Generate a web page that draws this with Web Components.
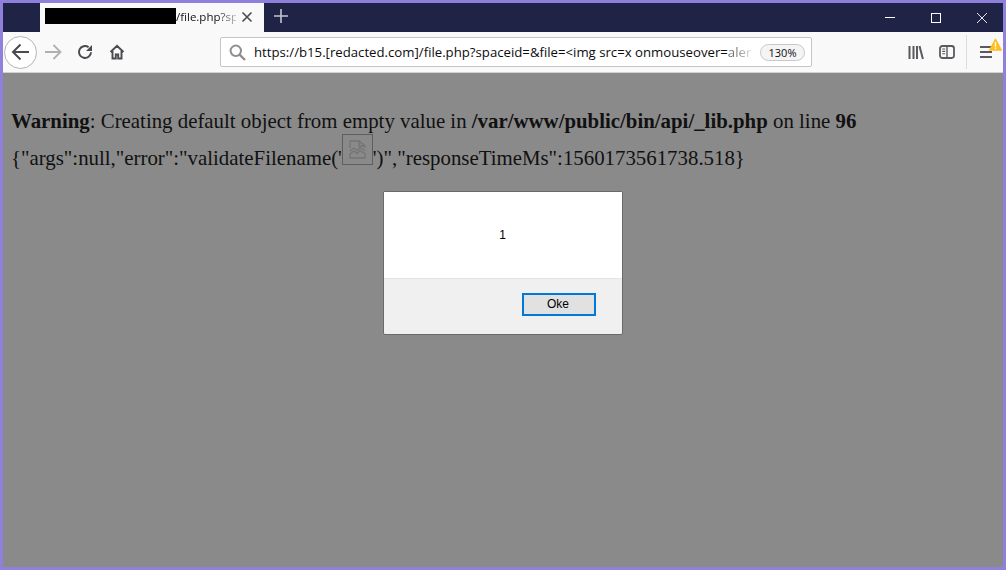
<!DOCTYPE html>
<html>
<head>
<meta charset="utf-8">
<title>file.php</title>
<style>
  html, body { margin: 0; height: 100%; }
  body { background: #8f80dc; overflow: hidden; }
</style>
</head>
<body>
<browser-window>
  <browser-tabbar slot="tabs"></browser-tabbar>
  <browser-navbar slot="nav"></browser-navbar>
  <php-page>
    <p class="line"><b>Warning</b>: Creating default object from empty value in <b>/var/www/public/bin/api/_lib.php</b> on line <b>96</b></p>
  </php-page>
  <alert-dialog slot="dialog" message="1" button="Oke"></alert-dialog>
</browser-window>

<script>
class BrowserWindow extends HTMLElement {
  constructor() {
    super();
    this.attachShadow({ mode: 'open' });
    this.shadowRoot.innerHTML = `
      <style>
        :host {
          display: flex;
          flex-direction: column;
          box-sizing: border-box;
          width: 1006px;
          height: 570px;
          border: 3px solid #8f80dc;
          position: relative;
          background: #8a8a8a;
        }
        .content { flex: 1; position: relative; }
      </style>
      <slot name="tabs"></slot>
      <slot name="nav"></slot>
      <div class="content">
        <slot></slot>
        <slot name="dialog"></slot>
      </div>
    `;
  }
}

class BrowserTabbar extends HTMLElement {
  constructor() {
    super();
    this.attachShadow({ mode: 'open' });
    this.shadowRoot.innerHTML = `
      <style>
        :host {
          display: flex;
          height: 29px;
          background: #1f2345;
          flex: none;
        }
        .spacer { width: 37px; flex: none; }
        .tab {
          width: 224px;
          height: 29px;
          flex: none;
          background: #f9f9fa;
          display: flex;
          align-items: flex-start;
          box-sizing: border-box;
          padding: 5px 0 0 5px;
          font: 11.5px "Open Sans", "Noto Sans", sans-serif;
          color: #111;
        }
        .black { width: 131px; height: 16px; background: #000; flex: none; }
        .title {
          width: 60px;
          white-space: nowrap;
          line-height: 17px;
          flex: none;
          -webkit-mask-image: linear-gradient(to right, #000 68%, rgba(0,0,0,.25) 100%);
          mask-image: linear-gradient(to right, #000 68%, rgba(0,0,0,.25) 100%);
        }
        .close { margin: 3px 0 0 5px; flex: none; display: block; }
        .plus { margin: 6px 0 0 10px; flex: none; display: block; }
        .controls { margin-left: auto; display: flex; }
        .ctl { width: 46px; height: 29px; display: flex; align-items: center; justify-content: center; }
        .ctl.last { width: 44px; justify-content: flex-start; padding-left: 18px; box-sizing: border-box; }
      </style>
      <div class="spacer"></div>
      <div class="tab">
        <div class="black"></div>
        <div class="title">/file.php?sp</div>
        <svg class="close" width="12" height="12" viewBox="0 0 12 12"><path d="M1.5 1.5l9 9M10.5 1.5l-9 9" stroke="#4a4a4f" stroke-width="1.6" fill="none"/></svg>
      </div>
      <svg class="plus" width="14" height="14" viewBox="0 0 14 14"><path d="M7 0v14M0 7h14" stroke="#c4c5d0" stroke-width="1.6" fill="none"/></svg>
      <div class="controls">
        <div class="ctl"><svg width="10" height="10" viewBox="0 0 10 10"><path d="M0 4.5h10" stroke="#fff" fill="none"/></svg></div>
        <div class="ctl"><svg width="10" height="10" viewBox="0 0 10 10"><rect x=".5" y=".5" width="9" height="9" stroke="#fff" fill="none"/></svg></div>
        <div class="ctl last"><svg width="10" height="10" viewBox="0 0 10 10"><path d="M0 0l10 10M10 0L0 10" stroke="#fff" stroke-width=".9" fill="none"/></svg></div>
      </div>
    `;
  }
}

class BrowserNavbar extends HTMLElement {
  constructor() {
    super();
    this.attachShadow({ mode: 'open' });
    this.shadowRoot.innerHTML = `
      <style>
        :host {
          display: flex;
          align-items: center;
          flex: none;
          height: 41px;
          box-sizing: border-box;
          background: #f9f9fa;
          border-bottom: 1px solid #d2d2d4;
          position: relative;
        }
        svg { display: block; flex: none; }
        .back {
          width: 33px; height: 33px; box-sizing: border-box; flex: none;
          border: 1px solid #b4b4b6; border-radius: 50%; background: #fff;
          display: flex; align-items: center; justify-content: center;
          margin-left: 1px;
        }
        .urlbar {
          box-sizing: border-box;
          width: 592px;
          height: 30px;
          background: #fff;
          border: 1px solid #c5c5c7;
          border-radius: 2px;
          display: flex;
          align-items: center;
          flex: none;
          font: 13.2px "Open Sans", "Noto Sans", sans-serif;
          color: #0c0c0d;
        }
        .url {
          margin-left: 8px;
          width: 498px;
          white-space: nowrap;
          flex: none;
        }
        .url span {
          color: #737373;
          -webkit-mask-image: linear-gradient(to right, #000 30%, rgba(0,0,0,.2) 100%);
          mask-image: linear-gradient(to right, #000 30%, rgba(0,0,0,.2) 100%);
        }
        .zoom {
          margin-left: 8px;
          box-sizing: border-box;
          width: 45px; height: 17px;
          border: 1px solid #c8c8c8;
          background: #f4f4f4;
          border-radius: 9px;
          font-size: 11px;
          line-height: 15px;
          text-align: center;
          flex: none;
        }
        .sep { width: 1px; height: 34px; background: #dcdcde; margin-left: 11px; flex: none; }
        .menu { position: relative; margin-left: 13px; }
        .warn { position: absolute; left: 9px; top: -8px; }
      </style>
      <div class="back">
        <svg width="19" height="18" viewBox="0 0 19 18"><path d="M9.5 1.5L2 9l7.5 7.5M2 9h16" stroke="#4a4a4f" stroke-width="2" fill="none"/></svg>
      </div>
      <svg style="margin-left:7px" width="18" height="16" viewBox="0 0 18 16"><path d="M9.5 1l7 7-7 7M16.5 8H1" stroke="#b1b1b3" stroke-width="1.8" fill="none"/></svg>
      <svg style="margin-left:15px" width="16" height="16" viewBox="0 0 16 16"><path d="M14 8.2A6 6 0 1 1 11.6 3.2" stroke="#4a4a4f" stroke-width="2" fill="none"/><path d="M15 1v6H9z" fill="#4a4a4f"/></svg>
      <svg style="margin-left:16px" width="16" height="16" viewBox="0 0 16 16"><path d="M1.5 8L8 1.8 14.5 8M3.5 7v7.5h3.3v-4h2.4v4h3.3V7" stroke="#4a4a4f" stroke-width="1.9" fill="none"/></svg>
      <div class="urlbar" style="margin-left:95px">
        <svg style="margin-left:8px" width="17" height="17" viewBox="0 0 17 17"><circle cx="6.8" cy="6.8" r="5.2" stroke="#8f8f91" stroke-width="2" fill="none"/><path d="M10.6 10.6L16 16" stroke="#8f8f91" stroke-width="2.4" fill="none"/></svg>
        <div class="url">https://b15.[redacted.com]/file.php?spaceid=&amp;file=&lt;img src=x onmouseover=<span>aler</span></div>
        <div class="zoom">130%</div>
      </div>
      <svg style="margin-left:96px" width="16" height="15" viewBox="0 0 16 15"><path d="M1.5 1v13M5.5 1v13M9 1v13" stroke="#5b5b5f" stroke-width="2" fill="none"/><path d="M11.5 1l3.4 13" stroke="#5b5b5f" stroke-width="2" fill="none"/></svg>
      <svg style="margin-left:15px" width="16" height="14" viewBox="0 0 16 14"><rect x="1" y="1" width="14" height="12" rx="2.4" stroke="#5b5b5f" stroke-width="1.8" fill="none"/><path d="M8 1v12" stroke="#5b5b5f" stroke-width="1.4"/><path d="M3.2 4h3M3.2 6.4h3M3.2 8.8h3" stroke="#5b5b5f" stroke-width="1.1"/></svg>
      <div class="sep"></div>
      <div class="menu">
        <svg width="12" height="12" viewBox="0 0 12 12"><path d="M0 1h12M0 6h12M0 11h12" stroke="#5b5b5f" stroke-width="1.8" fill="none"/></svg>
        <svg class="warn" width="13" height="13" viewBox="0 0 13 13"><path d="M6.5.8L12.6 12.2H.4z" fill="#ffbf1f" stroke="#ffbf1f" stroke-linejoin="round"/><path d="M6.5 4v4.4M6.5 9.6v1.4" stroke="#fff" stroke-width="1.4"/></svg>
      </div>
    `;
  }
}

class PhpPage extends HTMLElement {
  constructor() {
    super();
    this.attachShadow({ mode: 'open' });
    this.shadowRoot.innerHTML = `
      <style>
        :host {
          display: block;
          padding: 12px 10px 0 8px;
          font: 20.85px "Liberation Serif", serif;
          color: #111;
        }
        ::slotted(p) { margin: 0; padding-top: 24px; }
        .json { display: block; white-space: nowrap; }
        .broken {
          display: inline-block;
          box-sizing: border-box;
          width: 31px; height: 31px;
          border: 1px solid #5f5f5f;
          padding: 5px 6px;
        }
        .broken svg { display: block; }
      </style>
      <slot></slot>
      <span class="json">{"args":null,"error":"validateFilename('<span class="broken"><svg width="17" height="19" viewBox="0 0 17 19"><path d="M1 8V1h9l6 5v2M10 1v5h6" fill="none" stroke="#747474" stroke-width="1.3"/><path d="M1 11l4-3 3 2.5 3-3 5 3" fill="none" stroke="#747474" stroke-width="1.2"/><path d="M1 14l4-3 3 2.5 3-3 5 3V18H1z" fill="none" stroke="#747474" stroke-width="1.3"/></svg></span>')","responseTimeMs":1560173561738.518}</span>
    `;
  }
}

class AlertDialog extends HTMLElement {
  constructor() {
    super();
    this.attachShadow({ mode: 'open' });
    this.shadowRoot.innerHTML = `
      <style>
        :host {
          position: absolute;
          left: 380px;
          top: 118px;
          width: 240px;
          height: 144px;
          box-sizing: border-box;
          display: flex;
          flex-direction: column;
          background: #f0f0f0;
          border: 1px solid #6a6a6a;
          border-radius: 2px;
          font: 12px "Liberation Sans", Arial, sans-serif;
          color: #000;
        }
        .msg {
          height: 87px;
          flex: none;
          background: #fff;
          border-bottom: 1px solid #e4e4e4;
          display: flex;
          align-items: center;
          justify-content: center;
          box-sizing: border-box;
          padding: 0 1px 1px 0;
        }
        .foot { flex: 1; display: flex; justify-content: flex-end; padding: 14px 26px 0 0; }
        button {
          width: 74px; height: 23px;
          box-sizing: border-box;
          background: #e1e1e1;
          border: 2px solid #0078d7;
          font: inherit;
          padding: 0 2px 1px 0;
          color: #000;
        }
      </style>
      <div class="msg"></div>
      <div class="foot"><button></button></div>
    `;
    this.shadowRoot.querySelector('.msg').textContent = this.getAttribute('message') || '';
    this.shadowRoot.querySelector('button').textContent = this.getAttribute('button') || 'OK';
  }
}

customElements.define('browser-window', BrowserWindow);
customElements.define('browser-tabbar', BrowserTabbar);
customElements.define('browser-navbar', BrowserNavbar);
customElements.define('php-page', PhpPage);
customElements.define('alert-dialog', AlertDialog);
</script>
</body>
</html>
